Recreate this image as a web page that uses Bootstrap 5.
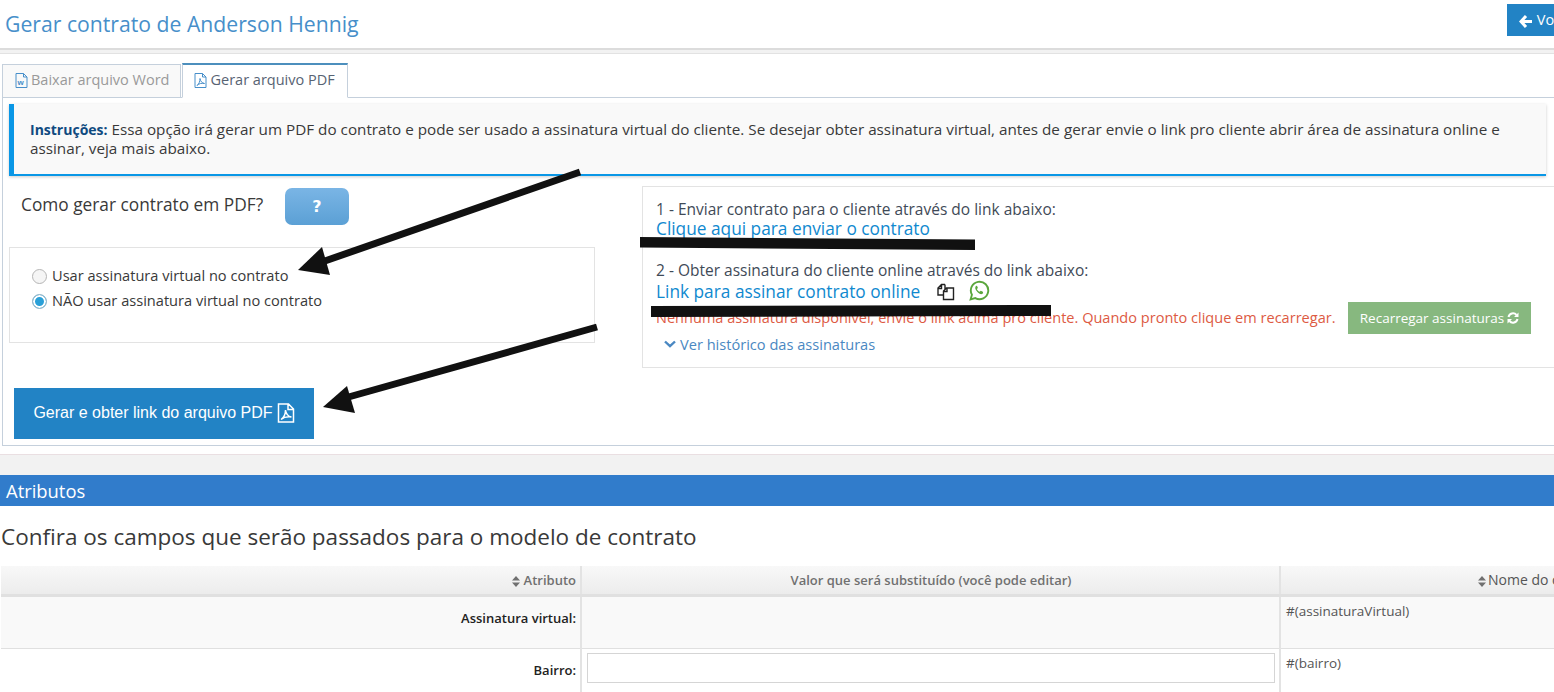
<!DOCTYPE html>
<html lang="pt-BR">
<head>
  <meta charset="UTF-8" />
  <meta name="viewport" content="width=device-width, initial-scale=1.0" />
  <title>Gerar contrato</title>
  <link href="https://cdn.jsdelivr.net/npm/bootstrap@5.3.0/dist/css/bootstrap.min.css" rel="stylesheet">
  <style>
    html, body { height: 692px; overflow: hidden; }
    body {
      position: relative;
      width: 1554px;
      background: #fff;
      color: #393939;
      font-family: "Open Sans", "Liberation Sans", sans-serif;
      font-size: 13px;
    }
    .page-top { height: 50px; border-bottom: 2px solid #dcdcdc; padding-left: 5px; }
    .page-title { font-size: 21.2px; font-weight: 400; color: #478fca; margin: 0; padding-top: 10px; line-height: 28px; }
    .btn-back {
      width: 100px; height: 32px; margin-top: 4px; margin-right: -53px;
      background: #2283c5; color: #fff; border: 0; border-radius: 0;
      font-family: "Open Sans", sans-serif; font-size: 14.5px; padding: 0 0 0 12px; text-align: left;
    }
    .gray-gap { height: 4px; background: #f2f2f2; border-bottom: 1px solid #e2e2e2; }
    .tabs-wrap { padding: 10px 0 0 2px; }
    .tabs-wrap .nav-tabs { border-bottom: 1px solid #c5d0dc; height: 34px; --bs-nav-tabs-border-radius: 0; }
    .tabs-wrap .nav-link {
      height: 34px; padding: 0 11px 2px 12px; font-size: 14.5px; line-height: 20px; color: #999;
      background: #f9f9f9; border: 1px solid #c5d0dc; border-radius: 0; margin: 0;
      display: flex; align-items: center; gap: 3px;
    }
    .tabs-wrap .nav-link.active {
      color: #576373; background: #fff; border-color: #c5d0dc #c5d0dc #fff;
      border-top: 2px solid #4c8fbd; margin-top: -1px; height: 35px; margin-left: 1px; padding-left: 11px; padding-right: 12px;
    }
    .tab-body {
      height: 348px; margin-left: 2px; border-left: 1px solid #c5d0dc; border-bottom: 1px solid #c5d0dc;
      padding: 6px 9px 0 6px;
    }
    .info-box {
      height: 72px; background: #f9f9f9; border-left: 5px solid #0a97e6; border-bottom: 2px solid #0a97e6;
      padding: 15.5px 16px 0 16px; font-size: 15.25px; line-height: 19.5px; color: #393939;
      box-shadow: 0 1px 3px rgba(0,0,0,.2); margin-right: -1px;
    }
    .info-box b { color: #0f4a80; font-weight: 700; font-size: 14px; }
    .split { display: flex; width: 1700px; }
    .left-side { width: 586px; flex: none; }
    .how-row { display: flex; align-items: flex-start; height: 71px; padding: 12px 0 0 12px; }
    .how-row span { font-size: 17.3px; line-height: 32px; padding-top: 1px; color: #393939; width: 264px; }
    .btn-help {
      width: 64px; height: 37px; border: 0; border-radius: 7px; color: #fff; font-weight: 700; font-size: 16px;
      background: linear-gradient(#7ab5e5, #5ba0d5); padding: 0; font-family: "DejaVu Sans", sans-serif;
    }
    .radio-box { height: 96px; border: 1px solid #e3e3e3; padding: 14px 0 0 22px; }
    .radio-box .form-check { min-height: 0; height: 25px; margin: 0; padding: 0; display: flex; align-items: center; gap: 5px; }
    .radio-box .form-check-input {
      float: none; margin: 4px 0 0; width: 15px; height: 15px; flex: none; background-color: #f5f5f5; border-color: #b5b5b5;
    }
    .radio-box .form-check-input:checked { background-color: #2aa0d8; border-color: #9cb8c8; background-image: none; box-shadow: inset 0 0 0 2px #fff; }
    .radio-box label { font-size: 14.6px; color: #393939; line-height: 20px; }
    .btn-pdf {
      display: flex; align-items: center; gap: 4px; justify-content: center;
      width: 300px; height: 51px; margin: 45px 0 0 5px; padding: 0 0 2px; background: #2283c5; border: 0; border-radius: 0; color: #fff;
      font-family: "Liberation Sans", Arial, sans-serif; font-size: 16px;
    }
    .right-side {
      width: 1000px; height: 182px; margin: 10px 0 0 47px; flex: none; border: 1px solid #e3e3e3; padding: 12px 13px 0;
      font-size: 15.5px; line-height: 20px; color: #3f4a57;
    }
    .link-big { font-size: 17.3px; color: #1089cf; text-decoration: none; line-height: 20px; }
    .step-two { margin-top: 21px; }
    .sign-row { display: flex; align-items: center; height: 23px; }
    .sign-row svg { flex: none; }
    .copy-ic { margin-left: 17px; }
    .wpp-ic { margin-left: 14px; margin-top: -3px; }
    .red-row { display: flex; align-items: flex-start; height: 37px; margin-top: 3px; }
    .red-row span { color: #dd5a43; width: 692px; flex: none; line-height: 20px; font-size: 14.56px; padding-top: 1px; }
    .btn-reload {
      width: 183px; height: 32px; margin-top: -4px; background: #87b87f; color: #fff; border: 0; border-radius: 0; padding: 0;
      font-family: "Open Sans", sans-serif; font-size: 13.5px; display: flex; align-items: center; justify-content: center; gap: 3px;
    }
    .history { display: flex; align-items: center; gap: 4px; padding-left: 8px; color: #4a88c2; font-size: 14.6px; text-decoration: none; margin-top: -9px; }
    .band-gap { height: 29px; padding-top: 8px; }
    .band-gap div { height: 21px; background: #f2f2f2; border-top: 1px solid #eadfe2; }
    .band-blue { height: 31px; background: #317ccb; color: #fff; font-size: 18.4px; line-height: 32px; padding-left: 6px; }
    .attr-title { font-size: 22.5px; font-weight: 400; color: #393939; margin: 0; padding: 17px 0 0 1px; height: 60px; line-height: 28px; }
    .attr-wrap { padding-left: 1px; }
    .attr-table { table-layout: fixed; width: 1794px; margin: 0; font-size: 13px; border-collapse: collapse; --bs-table-bg: transparent; }
    .attr-table th, .attr-table td { border: 0; border-right: 2px solid #e3e3e3; border-bottom: 1px solid #e0e0e0; padding: 0 4px 0 5px; color: #393939; }
    .attr-table thead th {
      height: 29px; background: linear-gradient(#f8f8f8, #ececec); border-bottom: 3px solid #e0e0e0;
      font-weight: 600; font-size: 13px; color: #707070; line-height: 28px; vertical-align: top;
    }
    .attr-table thead th.name-col { font-weight: 400; font-size: 14px; color: #555; }
    .name-col svg { margin-right: -2px; }
    .row-odd td { background: #f9f9f9; height: 53px; }
    .row-even td { height: 50px; }
    .attr-table .lbl { text-align: right; font-weight: 600; vertical-align: middle; color: #222; }
    .attr-table .tag { vertical-align: top; padding-top: 4px; color: #555; font-size: 13.5px; }
    .attr-table .field { vertical-align: top; padding-top: 4px; }
    .row-even .lbl { padding-bottom: 6px; }
    .row-odd .lbl { padding-bottom: 8px; }
    .attr-input { display: block; width: 100%; height: 30px; border: 1px solid #d5d5d5; background: #fff; }
    .overlay { position: absolute; left: 0; top: 0; width: 1554px; height: 692px; pointer-events: none; }
  </style>
</head>
<body>
  <div class="page-top d-flex justify-content-between">
    <h1 class="page-title">Gerar contrato de Anderson Hennig</h1>
    <button class="btn-back">
      <svg width="14" height="13" viewBox="0 0 14 13"><path d="M7 1 2 6.500 7 12M2.500 6.500H13" fill="none" stroke="#fff" stroke-width="3"/></svg>
      Voltar
    </button>
  </div>
  <div class="gray-gap"></div>

  <div class="tabs-wrap">
    <ul class="nav nav-tabs">
      <li class="nav-item">
        <a class="nav-link" href="#">
          <svg width="13" height="15" viewBox="0 0 13 15"><path d="M1 .5h7.500L12 4v10.500H1zM8.500.5V4H12" fill="none" stroke="#478fca"/><text x="2.500" y="12" font-size="8" font-weight="700" fill="#478fca" font-family="Liberation Sans">w</text></svg>
          Baixar arquivo Word
        </a>
      </li>
      <li class="nav-item">
        <a class="nav-link active" href="#">
          <svg width="13" height="15" viewBox="0 0 13 15"><path d="M1 .5h7.500L12 4v10.500H1zM8.500.5V4H12M3 12.500c2-1.500 3-4 3-7 .5 3 2 4.500 4.500 5-3-.5-5.500 0-7.500 2z" fill="none" stroke="#478fca"/></svg>
          Gerar arquivo PDF
        </a>
      </li>
    </ul>
  </div>

  <div class="tab-body">
    <div class="info-box">
      <b>Instruções:</b> Essa opção irá gerar um PDF do contrato e pode ser usado a assinatura virtual do cliente. Se desejar obter assinatura virtual, antes de gerar envie o link pro cliente abrir área de assinatura online e assinar, veja mais abaixo.
    </div>
    <div class="split">
      <div class="left-side">
        <div class="how-row">
          <span>Como gerar contrato em PDF?</span>
          <button class="btn-help">?</button>
        </div>
        <div class="radio-box">
          <div class="form-check">
            <input class="form-check-input" type="radio" name="assinatura" id="usar">
            <label for="usar">Usar assinatura virtual no contrato</label>
          </div>
          <div class="form-check">
            <input class="form-check-input" type="radio" name="assinatura" id="nao" checked>
            <label for="nao">NÃO usar assinatura virtual no contrato</label>
          </div>
        </div>
        <button class="btn-pdf">
          Gerar e obter link do arquivo PDF
          <svg width="18" height="20" viewBox="0 0 18 20"><path d="M1.500 1h10L16.500 6v13h-15zM11 1v5.500h5.500M4 16.500c3-2 4.500-5.500 4.500-9.500.5 4 3 6.500 6 7-4-.5-7.500 0-10.500 2.500z" fill="none" stroke="#fff" stroke-width="1.500"/></svg>
        </button>
      </div>
      <div class="right-side">
        <div>1 - Enviar contrato para o cliente através do link abaixo:</div>
        <a class="link-big" href="#">Clique aqui para enviar o contrato</a>
        <div class="step-two">2 - Obter assinatura do cliente online através do link abaixo:</div>
        <div class="sign-row">
          <a class="link-big" href="#">Link para assinar contrato online</a>
          <svg class="copy-ic" width="18" height="18" viewBox="0 0 18 18"><path d="M8 1.500H4.500L1 5v7h5M8 1.500V6M4.500 1.500V5.500H1M12 5H9.500L6.500 8v8.500H16.500V5zM6.500 8.500H10V5" fill="none" stroke="#222" stroke-width="1.400"/></svg>
          <svg class="wpp-ic" width="21" height="21" viewBox="0 0 20 20"><path d="M1.500 18.500 2.800 14A8.300 8.300 0 1 1 6 17.200z" fill="#fff" stroke="#5aa63c" stroke-width="1.800"/><path d="M6.800 5.500c-1.500 1.500-1 3.500 1 5.700s4.200 3 5.700 1.500l-.3-1.500-2-.9-1 1c-1-.3-2.300-1.600-2.700-2.700l1-1-.8-2z" fill="#5aa63c"/></svg>
        </div>
        <div class="red-row">
          <span>Nenhuma assinatura disponível, envie o link acima pro cliente. Quando pronto clique em recarregar.</span>
          <button class="btn-reload">
            Recarregar assinaturas
            <svg width="12" height="12" viewBox="0 0 12 12"><path d="M1.500 5A4.600 4.600 0 0 1 9.500 3M10.500 7A4.600 4.600 0 0 1 2.500 9" fill="none" stroke="#fff" stroke-width="2"/><path d="M11.500 .5V5H7zM.5 11.500V7H5z" fill="#fff"/></svg>
          </button>
        </div>
        <a class="history" href="#">
          <svg width="12" height="8" viewBox="0 0 12 8"><path d="M1 1.500 6 6.200 11 1.500" fill="none" stroke="#4a88c2" stroke-width="2.400"/></svg>
          Ver histórico das assinaturas
        </a>
      </div>
    </div>
  </div>

  <div class="band-gap"><div></div></div>
  <div class="band-blue">Atributos</div>
  <h2 class="attr-title">Confira os campos que serão passados para o modelo de contrato</h2>
  <div class="attr-wrap">
    <table class="table attr-table">
      <colgroup><col style="width:580px"><col style="width:699px"><col></colgroup>
      <thead>
        <tr>
          <th class="text-end">
            <svg width="8" height="11" viewBox="0 0 8 11"><path d="M4 0 8 4.500H0zM4 11 0 6.500H8z" fill="#707070"/></svg>
            Atributo
          </th>
          <th class="text-center">Valor que será substituído (você pode editar)</th>
          <th class="text-center name-col">
            <svg width="8" height="11" viewBox="0 0 8 11"><path d="M4 0 8 4.500H0zM4 11 0 6.500H8z" fill="#707070"/></svg>
            Nome do campo
          </th>
        </tr>
      </thead>
      <tbody>
        <tr class="row-odd">
          <td class="lbl">Assinatura virtual:</td>
          <td></td>
          <td class="tag">#(assinaturaVirtual)</td>
        </tr>
        <tr class="row-even">
          <td class="lbl">Bairro:</td>
          <td class="field"><input class="attr-input" type="text"></td>
          <td class="tag">#(bairro)</td>
        </tr>
      </tbody>
    </table>
  </div>

  <svg class="overlay" viewBox="0 0 1554 692">
    <polygon points="640,237 975,239.500 975,250 640,247.500" fill="#111"/>
    <polygon points="651,306 1051,305 1051,316 651,317" fill="#111"/>
    <path d="M580 172 322 262M597 327 345 398" stroke="#111" stroke-width="7" fill="none"/>
    <polygon points="298,270 322,247 330,275" fill="#111"/>
    <polygon points="323,407 347,386 355,413" fill="#111"/>
  </svg>
</body>
</html>
